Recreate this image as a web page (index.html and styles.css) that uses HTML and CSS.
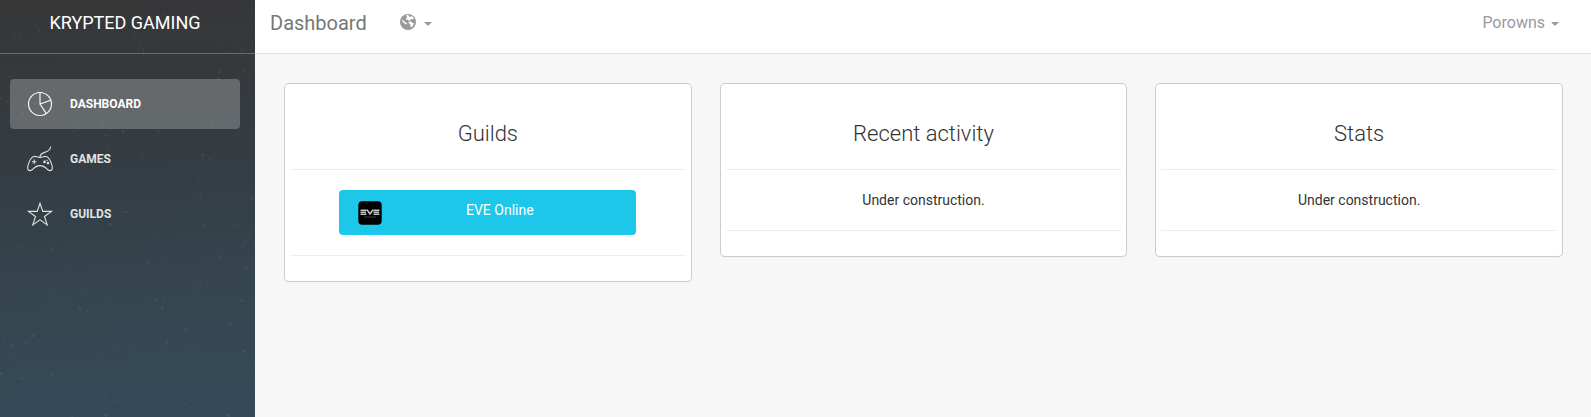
FILE: index.html
```html
<!DOCTYPE html>
<html lang="en">
<head>
<meta charset="utf-8">
<title>Dashboard</title>
<link rel="stylesheet" href="styles.css">
</head>
<body>
<div class="app">
  <aside class="sidebar">
    <svg class="stars" viewBox="0 0 255 417" aria-hidden="true"></svg>
    <div class="brand">KRYPTED GAMING</div>
    <nav class="menu">
      <a class="item active">
        <svg class="icon" viewBox="0 0 28 28"><circle cx="14" cy="14" r="11.5"/><path d="M14 2.5V14l10.8-3.7M14 14l6.3 9.6"/></svg>
        <span>DASHBOARD</span>
      </a>
      <a class="item">
        <svg class="icon" viewBox="0 0 28 28"><g transform="translate(0 -.8)"><path d="M14 12.700C14 6.500 24 10 24.700 2.300M8 12.300c2-.5 3 .9 6 .9s4-1.400 6-.9c4 .8 6.700 9.500 6.300 12.200-.4 2.300-3.300 2.600-4.900.7-1.800-2-3.400-3.800-7.400-3.800s-5.600 1.800-7.400 3.800c-1.600 1.900-4.500 1.600-4.900-.7-.4-2.700 2.300-11.400 6.300-12.200z"/><path d="M8.200 15.300v4.400M6 17.500h4.400"/><g class="dots"><circle cx="18.500" cy="17.700" r="1.300"/><circle cx="22" cy="18.900" r="1.300"/><circle cx="21" cy="16.200" r=".7"/></g></g></svg>
        <span>GAMES</span>
      </a>
      <a class="item">
        <svg class="icon" viewBox="0 0 28 28"><path d="M14 3.200l2.800 8.200h8.700l-7 5.100 2.700 8.400-7.200-5.100-7.200 5.100 2.700-8.400-7-5.100h8.700z"/></svg>
        <span>GUILDS</span>
      </a>
    </nav>
  </aside>
  <main class="main">
    <header class="navbar">
      <span class="title">Dashboard</span>
      <a class="locale">
        <svg class="globe" viewBox="0 0 16 16"><circle cx="8" cy="8" r="8"/><path class="land" d="M6.200 1.200l2.200-.4.2 1.300 1.500.8 1.300-1 1.500 1 .9 1.700-1.200 1-1.300-.5-1.500 1.300-1.600.2-.5-1.300-1.400.6-.6-1.200 1.500-1.200z"/><path class="land" d="M2.300 5l1.500 2.200 2 1.200 1.300 1-.6 1-2-.9-2.200-2zM8.500 7.800l2.500-.2 1.400 1.200 1.600.5-1.200 2.600-1.700 1.500-1-1.900.3-1.600-1.700-.6z"/></svg>
        <i class="caret"></i>
      </a>
      <a class="user">Porowns<i class="caret"></i></a>
    </header>
    <section class="cards">
      <article class="card">
        <h4>Guilds</h4>
        <hr>
        <a class="guild">
          <svg class="logo" viewBox="0 0 24 24"><rect x=".3" y=".3" width="23.400" height="23.400" rx="4"/><path d="M2.500 9.200H8.500M2.500 11.200H8M2.500 13.200H8.500M9 8.700l3 4.300 3-4.300M15.500 9.200H21.500M15.500 11.200H21M15.500 13.200H21.500"/><path class="sub" d="M6.500 16h11.500"/></svg>
          <span>EVE Online</span>
        </a>
        <hr>
      </article>
      <article class="card">
        <h4>Recent activity</h4>
        <hr>
        <p>Under construction.</p>
        <hr>
      </article>
      <article class="card">
        <h4>Stats</h4>
        <hr>
        <p>Under construction.</p>
        <hr>
      </article>
    </section>
  </main>
</div>
<script src="stars.js"></script>
</body>
</html>
```

FILE: styles.css
```css
* { box-sizing: border-box; }
body { margin: 0; font-family: Roboto, "Liberation Sans", sans-serif; background: #f7f7f7; overflow: hidden; }
.app { display: flex; height: 417px; }
.sidebar { position: relative; width: 255px; flex: none; color: #fff; background: linear-gradient(176deg, #363637 0%, #353a3e 24%, #343e45 46%, #364650 72%, #344a5a 100%); }
.stars { position: absolute; inset: 0; width: 255px; height: 417px; }
.stars circle { fill: #9ab4bd; }
.stars path { fill: none; stroke: #9ab4bd; stroke-width: 1; opacity: .06; }
.brand { position: relative; height: 54px; padding: 8px 5px 0 0; border-bottom: 1px solid #696c6e; font-size: 18px; line-height: 30px; text-align: center; }
.menu { position: relative; padding: 25px 15px 0 10px; display: flex; flex-direction: column; gap: 5px; }
.item { height: 50px; padding-left: 16px; display: flex; align-items: center; gap: 16px; border-radius: 4px; font-size: 12px; font-weight: 700; opacity: .86; }
.item.active { background: rgba(255, 255, 255, .24); opacity: 1; }
.icon { width: 28px; height: 28px; fill: none; stroke: #fff; stroke-width: 1.1; }
.icon .dots { fill: #fff; stroke: none; }
.main { flex: 1; min-width: 0; }
.navbar { height: 54px; padding: 8px 32px 0 15px; display: flex; align-items: flex-start; background: #fff; border-bottom: 1px solid #e1e1e1; color: #9a9a9a; }
.title { font-size: 20px; line-height: 30px; color: #777; }
.locale { margin-left: 33.500px; height: 30px; display: flex; align-items: center; }
.globe { width: 16px; height: 16px; margin-top: -2px; fill: #999; }
.globe .land { fill: #fff; }
.caret { display: inline-block; margin-left: 8px; border: 4px solid transparent; border-top-color: #999; border-bottom: 0; margin-top: 2px; }
.user { margin-left: auto; height: 28px; display: flex; align-items: center; font-size: 16px; }
.user .caret { margin-left: 6px; margin-top: 4px; }
.cards { padding: 30px 29px 0 30px; display: grid; grid-template-columns: repeat(3, 1fr); gap: 30px; align-items: start; }
.card { padding: 35px 5px 25px; background: #fff; border-radius: 4px; box-shadow: 0 0 0 1px #ccc, 0 1px 1px 0 rgba(0, 0, 0, .12); text-align: center; color: #333; }
h4 { margin: 0 0 20px; font-size: 22px; line-height: 30px; font-weight: 300; }
hr { margin: 0; border: 0; border-top: 1px solid #eee; }
.card p { margin: 20px 0; font-size: 14px; line-height: 20px; }
.guild { width: 297px; height: 45px; margin: 20px auto; padding: 0 19px; display: flex; align-items: center; border-radius: 4px; background: #1dc7ea; color: #fff; font-size: 14px; }
.guild span { margin: -6px auto 0; }
.logo { width: 24px; height: 24px; flex: none; }
.logo path { fill: none; stroke: #c4c4c4; stroke-width: 1.500; }
.logo .sub { stroke: #555; stroke-dasharray: 1 1; }
```

FILE: stars.js
```js
// Scatter faint specks and connecting threads over the sidebar backdrop.
const svg = document.querySelector('.stars');
let seed = 17;
const rnd = () => (seed = (seed * 16807) % 2147483647) / 2147483647;
let out = '';
for (let i = 0; i < 170; i++) {
  const x = rnd() * 255, y = rnd() * 417;
  out += `<circle cx="${x}" cy="${y}" r="${0.7 + rnd() * 0.8}" opacity="${0.03 + rnd() * 0.1}"/>`;
  if (i % 6 === 0) out += `<path d="M${x} ${y}l${rnd() * 24 - 12} ${rnd() * 24 - 12}"/>`;
}
svg.innerHTML = out;
```
